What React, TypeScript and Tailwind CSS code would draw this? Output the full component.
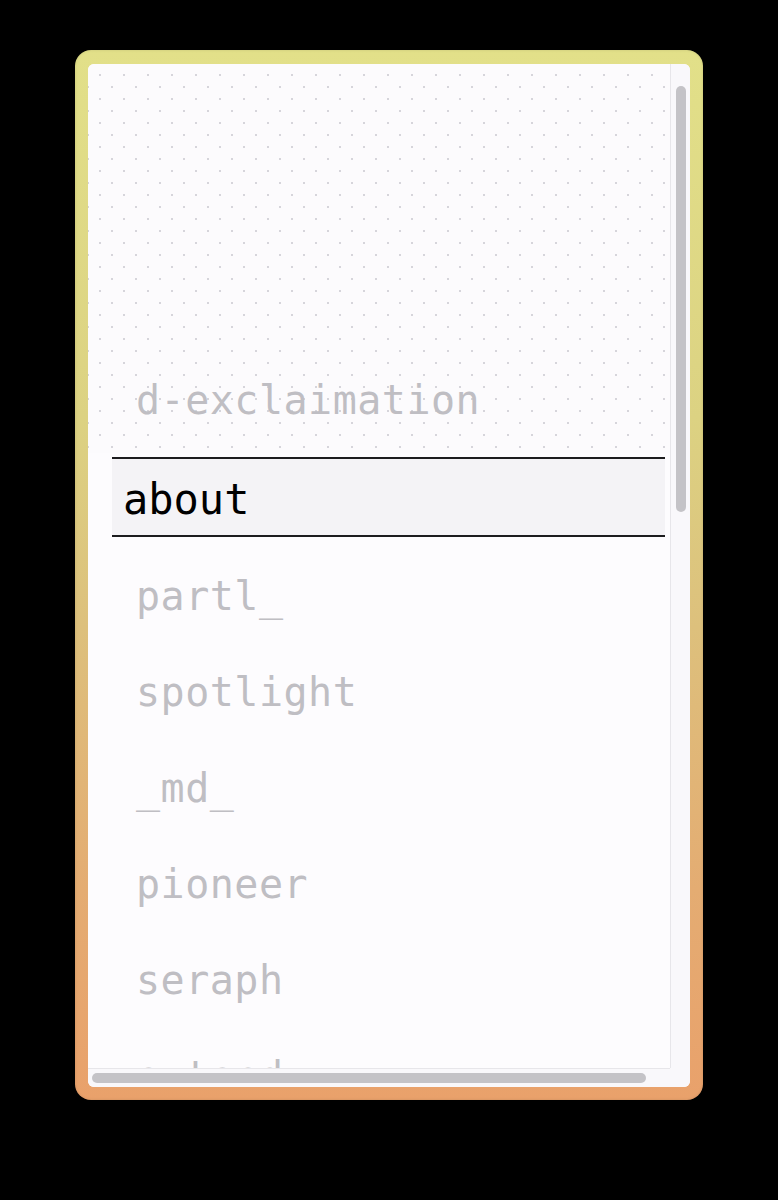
import React from "react";

const items = ["partl_", "spotlight", "_md_", "pioneer", "seraph", "extend"];

const mono = "font-['DejaVu_Sans_Mono','Liberation_Mono',monospace]";

function Row({ label }: { label: string }) {
  return (
    <div className="h-24 flex items-center pl-[48px] pt-[6px]">
      <span className={`${mono} text-[40px] tracking-[0.5px] text-[#bfbec3] whitespace-nowrap`}>{label}</span>
    </div>
  );
}

export default function App() {
  return (
    <div className="min-h-[1200px] bg-black flex justify-center pt-[50px]">
      <div className="w-[628px] h-[1050px] rounded-[16px] px-[13px] pt-[14px] pb-[13px] bg-[linear-gradient(180deg,#e2e089_0%,#dcd282_35%,#ddc07c_55%,#e4ac72_80%,#e9a16b_100%)] shadow-[inset_0_0_3px_rgba(0,0,0,0.12)]">
        <div className="h-full rounded-[6px] bg-[#fdfcfe] overflow-hidden grid grid-cols-[1fr_20px] grid-rows-[1fr_19px]">
          {/* List */}
          <div className="overflow-hidden">
            <div className="w-[606px]">
              {/* dotted header area */}
              <div className="h-[389px] flex flex-col bg-[#fcfbfd] bg-[radial-gradient(circle,#d6d5db_0.8px,transparent_1.3px),radial-gradient(circle,#d6d5db_0.8px,transparent_1.3px)] bg-[length:24px_24px] bg-[position:0px_-1px,12px_11px]">
                <div className="h-[285px]" />
                <Row label="d-exclaimation" />
              </div>

              {/* selected */}
              <div className="mt-[4px] mb-[8px] ml-[24px] w-[553px] h-20 border-y-2 border-[#1c1c1e] bg-[#f4f3f6] flex items-center pl-[11px] pt-[4px]">
                <span className={`${mono} text-[42px] text-black whitespace-nowrap`}>about</span>
              </div>

              {items.map((label) => (
                <Row key={label} label={label} />
              ))}
            </div>
          </div>

          {/* vertical scrollbar */}
          <div className="border-l border-[#e7e6ea] bg-[#f9f8fb] flex flex-col pt-[22px] pl-[5px]">
            <div className="w-[10px] h-[426px] rounded-full bg-[#c4c3c7]" />
          </div>

          {/* horizontal scrollbar */}
          <div className="border-t border-[#e7e6ea] bg-[#f9f8fb] flex pt-[4px] pl-[4px]">
            <div className="h-[10px] w-[554px] rounded-full bg-[#c4c3c7]" />
          </div>

          {/* corner */}
          <div className="bg-[#f9f8fb]" />
        </div>
      </div>
    </div>
  );
}
